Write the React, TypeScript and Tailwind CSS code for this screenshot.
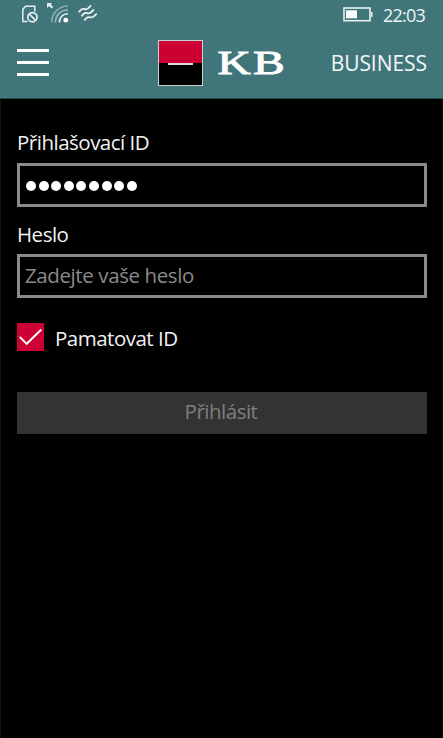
import React, { useState } from 'react';

const NoSimIcon: React.FC = () => (
  <svg width="18" height="20" viewBox="0 0 18 20" fill="none" stroke="#e6f0f0" strokeWidth="1.5">
    <path d="M6.5 16.6H1.8V4.4L4.6 1.3H13.8V6.5" />
    <circle cx="11.4" cy="12.2" r="4.6" strokeWidth="1.7" />
    <path d="M8.2 9l6.4 6.4" strokeWidth="1.7" />
  </svg>
);

const WifiIcon: React.FC = () => (
  <svg width="24" height="22" viewBox="0 0 24 22" fill="none">
    <path d="M0 0h5L3.8 1.5 6.2 3.9 4.6 5.4 2.1 3 0 5z" fill="#e6f0f0" />
    <g strokeWidth="1.6">
      <path d="M4.7 19.5C4.7 10.5 11.5 3 21 3" stroke="#8aadb0" />
      <path d="M8.4 19.5C8.4 12.4 13.5 7 21 7" stroke="#9bbabc" />
      <path d="M12.4 19.5C12.4 14.5 15.7 10.8 21 10.8" stroke="#e6f0f0" />
    </g>
    <circle cx="18.8" cy="17.2" r="2.4" fill="#fff" />
  </svg>
);

const VibrateIcon: React.FC = () => (
  <svg width="20" height="18" viewBox="0 0 20 18" fill="none" stroke="#e6f0f0" strokeWidth="1.8">
    <path d="M.8 8.3C3 4.7 4.8 4.4 6.7 5.1S10 5.3 13 1.3" />
    <path d="M3.5 12.4C5.7 8.8 7.5 8.5 9.4 9.2S12.7 9.4 15.8 5.4" />
    <path d="M6.3 16.5C8.5 12.9 10.3 12.6 12.2 13.3S15.5 13.5 18.7 9.5" />
  </svg>
);

const BatteryIcon: React.FC = () => (
  <svg width="30" height="15" viewBox="0 0 30 15">
    <rect x="1" y="1" width="26" height="12.7" fill="none" stroke="#e6f0f0" strokeWidth="1.6" />
    <rect x="3" y="3.3" width="11" height="8" fill="#fff" />
    <path d="M28 5h1.5v5H28z" fill="#e6f0f0" />
  </svg>
);

const StatusBar: React.FC = () => (
  <div className="flex h-[30px] items-start">
    <div className="pl-[21px] pt-[5px]">
      <NoSimIcon />
    </div>
    <div className="pl-[8px] pt-[3px]">
      <WifiIcon />
    </div>
    <div className="pl-[7px] pt-[4px]">
      <VibrateIcon />
    </div>
    <div className="ml-auto pt-[7px]">
      <BatteryIcon />
    </div>
    <span className="ml-[10px] mr-[17px] w-[43px] whitespace-nowrap pt-[3px] text-[18px] leading-6 tracking-[-0.8px] text-[#eef5f5]">
      22:03
    </span>
  </div>
);

const Header: React.FC = () => (
  <header className="h-[99px] border-b border-[#25474a] bg-[#40757a]">
    <StatusBar />
    <div className="flex h-[68px] items-start">
      <button aria-label="Menu" className="ml-[17px] mt-[19px] flex w-8 flex-col gap-[9px]">
        <span className="h-[3px] w-full bg-white" />
        <span className="h-[3px] w-full bg-white" />
        <span className="h-[3px] w-full bg-white" />
      </button>
      <div className="ml-[109px] mt-[10px] flex h-[46px] w-[45px] flex-col border border-[#c9d2d2] bg-black">
        <div className="h-[22px] bg-[#cc0033]" />
        <div className="mx-auto h-[2px] w-[25px] bg-[#e0dcdc]" />
      </div>
      <svg className="ml-[14px] mt-[12px]" width="74" height="46" viewBox="0 0 74 46">
        <g
          fill="#fff"
          stroke="#fff"
          strokeWidth="0.9"
          fontFamily="'Liberation Serif', serif"
          fontSize="33"
        >
          <text x="0.5" y="32" textLength="32.5" lengthAdjust="spacingAndGlyphs">K</text>
          <text x="36" y="32" textLength="31" lengthAdjust="spacingAndGlyphs">B</text>
        </g>
      </svg>
      <span className="ml-auto mr-[16px] mt-[19px] text-[21px] leading-7 tracking-[-0.05px] text-[#f2f7f7]">
        BUSINESS
      </span>
    </div>
  </header>
);

const App: React.FC = () => {
  const [remember, setRemember] = useState(true);

  return (
    <div className="h-[738px] w-[443px] overflow-hidden bg-black font-['Open_Sans',sans-serif] text-[20.5px] tracking-[-0.5px] text-[#f2f2f2]">
      <Header />
      <main className="flex h-[639px] flex-col border-x border-[#111] pl-4 pr-[15px] pt-[29px]">
        <label className="h-[35px] leading-7">Přihlašovací ID</label>
        <div className="flex h-[44px] items-center gap-[2.6px] border-[3px] border-[#8a8a8a] pl-[6px] pt-[1px]">
          {Array.from({ length: 9 }, (_, i) => (
            <span key={i} className="h-[10px] w-[10px] rounded-full bg-white" />
          ))}
        </div>
        <label className="mt-[13px] h-[34px] leading-7">Heslo</label>
        <div className="h-[44px] border-[3px] border-[#8a8a8a] pl-[5px]">
          <span className="leading-[37px] tracking-[-0.4px] text-[#8a8a8a]">Zadejte vaše heslo</span>
        </div>
        <div className="mt-[25px] flex h-7 items-center">
          <button
            role="checkbox"
            aria-checked={remember}
            aria-label="Pamatovat ID"
            onClick={() => setRemember(!remember)}
            className="h-7 w-[27px] bg-[#cc0033]"
          >
            {remember && (
              <svg width="27" height="28" viewBox="0 0 27 28" fill="none" stroke="#fff" strokeWidth="1.9">
                <path d="M2.7 13.8l7 7L24.3 6.5" />
              </svg>
            )}
          </button>
          <span className="ml-[11px] pt-[1px] leading-7">Pamatovat ID</span>
        </div>
        <button disabled className="mt-[41px] h-[42px] bg-[#333] pb-[3px] pr-[2px] text-[#7f7f7f]">
          Přihlásit
        </button>
      </main>
    </div>
  );
};

export default App;
